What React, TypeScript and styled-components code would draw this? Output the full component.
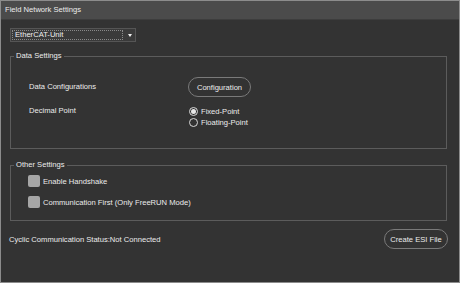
import styled, { createGlobalStyle } from 'styled-components';

const GlobalStyle = createGlobalStyle`
  html, body {
    margin: 0;
    padding: 0;
    background: #333333;
  }
  * {
    box-sizing: border-box;
  }
`;

const Window = styled.div`
  width: 460px;
  height: 283px;
  display: flex;
  flex-direction: column;
  border: 1px solid #8c8c8c;
  background: #333333;
  color: #ececec;
  font-family: 'Liberation Sans', Arial, sans-serif;
  font-size: 7.6px;
  overflow: hidden;
`;

const TitleBar = styled.div`
  height: 19px;
  flex-shrink: 0;
  background: #4b4b4b;
  border-bottom: 1px solid #3d3d3d;
  padding-left: 4px;
  line-height: 18px;
  color: #ececec;
`;

const Body = styled.div`
  display: flex;
  flex-direction: column;
  padding: 8px 12px 0 9px;
`;

const Dropdown = styled.div`
  width: 126px;
  height: 14px;
  display: flex;
  align-items: center;
  justify-content: space-between;
  padding: 0 3px 0 1px;
  border: 1px solid #555555;
  background: #3a3a3a;
`;

const DropdownField = styled.div`
  width: 111px;
  height: 10px;
  border: 1px dotted #8a8a8a;
  padding-left: 2px;
  line-height: 8px;
  color: #f0f0f0;
`;

const Arrow = styled.div`
  width: 0;
  height: 0;
  border-left: 2.5px solid transparent;
  border-right: 2.5px solid transparent;
  border-top: 3px solid #f0f0f0;
`;

const Group = styled.fieldset<{ $top: number }>`
  margin: ${(p) => p.$top}px 0 0 0;
  padding: 0;
  border: 1px solid #5c5c5c;
  min-width: 0;
`;

const Legend = styled.legend`
  margin-left: 3px;
  padding: 0 2px;
  line-height: 10px;
`;

const DataGrid = styled.div`
  display: grid;
  grid-template-columns: 159px auto;
  row-gap: 9px;
  padding: 16px 0 21px 18px;
`;

const Label = styled.div<{ $center?: boolean }>`
  display: flex;
  align-items: ${(p) => (p.$center ? 'center' : 'flex-start')};
  line-height: 10px;
`;

const PillButton = styled.button<{ $w: number }>`
  width: ${(p) => p.$w}px;
  height: 20px;
  padding: 0;
  border: 1px solid #7a7a7a;
  border-radius: 10px;
  background: #333333;
  color: #ececec;
  font-family: inherit;
  font-size: 7.6px;
`;

const RadioList = styled.div`
  display: flex;
  flex-direction: column;
  gap: 1px;
  margin-left: 1px;
`;

const Choice = styled.label`
  display: flex;
  align-items: center;
  gap: 3px;
  height: 10px;
`;

const Radio = styled.span<{ $on?: boolean }>`
  width: 9px;
  height: 9px;
  border-radius: 50%;
  border: 1px solid #d8d8d8;
  display: flex;
  align-items: center;
  justify-content: center;
  &::after {
    content: '';
    width: 5px;
    height: 5px;
    border-radius: 50%;
    background: ${(p) => (p.$on ? '#e8e8e8' : 'transparent')};
  }
`;

const CheckList = styled.div`
  display: flex;
  flex-direction: column;
  gap: 9px;
  padding: 5px 0 12px 17px;
`;

const Check = styled.label`
  display: flex;
  align-items: center;
  gap: 3px;
  height: 12px;
`;

const Box = styled.span`
  width: 12px;
  height: 12px;
  border-radius: 2px;
  background: #a6a6a6;
`;

const Footer = styled.div`
  display: flex;
  align-items: center;
  justify-content: space-between;
  margin: 8px -1px 0 -1px;
`;

export default function App() {
  return (
    <>
      <GlobalStyle />
      <Window>
        <TitleBar>Field Network Settings</TitleBar>
        <Body>
          <Dropdown>
            <DropdownField>EtherCAT-Unit</DropdownField>
            <Arrow />
          </Dropdown>

          <Group $top={9}>
            <Legend>Data Settings</Legend>
            <DataGrid>
              <Label $center>Data Configurations</Label>
              <PillButton $w={63}>Configuration</PillButton>
              <Label>Decimal Point</Label>
              <RadioList>
                <Choice>
                  <Radio $on />
                  Fixed-Point
                </Choice>
                <Choice>
                  <Radio />
                  Floating-Point
                </Choice>
              </RadioList>
            </DataGrid>
          </Group>

          <Group $top={11}>
            <Legend>Other Settings</Legend>
            <CheckList>
              <Check>
                <Box />
                Enable Handshake
              </Check>
              <Check>
                <Box />
                Communication First (Only FreeRUN Mode)
              </Check>
            </CheckList>
          </Group>

          <Footer>
            <span>Cyclic Communication Status:Not Connected</span>
            <PillButton $w={64}>Create ESI File</PillButton>
          </Footer>
        </Body>
      </Window>
    </>
  );
}
